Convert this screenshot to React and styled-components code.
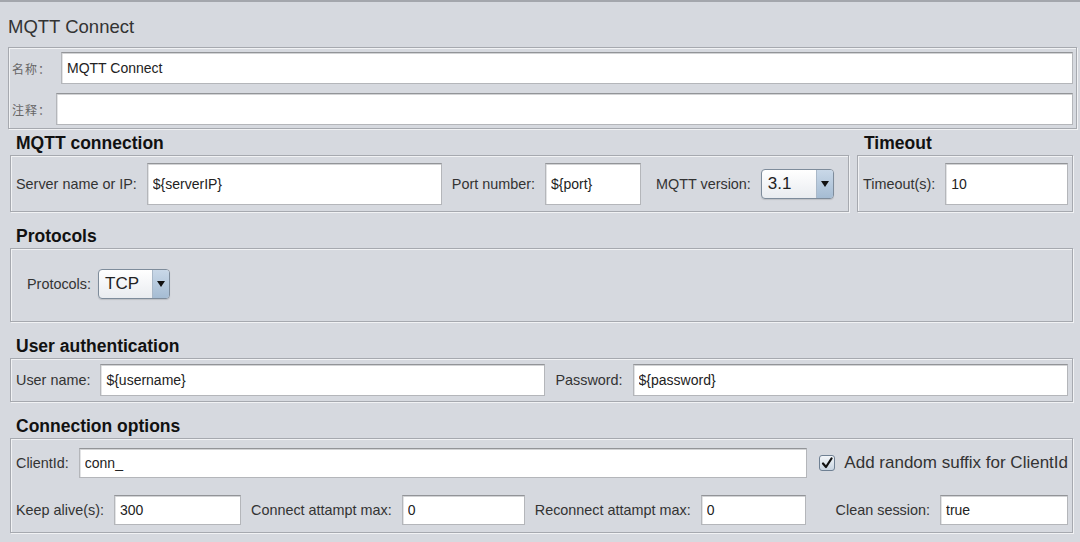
import React from 'react';
import styled, { createGlobalStyle } from 'styled-components';

const GlobalStyle = createGlobalStyle`
  html, body {
    margin: 0;
    padding: 0;
    background: #d6d9df;
  }
  * {
    box-sizing: border-box;
  }
`;

const Page = styled.div`
  width: 1080px;
  height: 542px;
  overflow: hidden;
  background: #d6d9df;
  border-top: 2px solid #a3a6ac;
  font-family: "Liberation Sans", Arial, sans-serif;
  color: #333;
`;

const PageTitle = styled.div`
  height: 45px;
  padding: 5px 0 0 8px;
  display: flex;
  align-items: center;
  font-size: 18.5px;
  color: #333;
`;

const Etched = styled.div`
  border: 1px solid #a6a9af;
  box-shadow: inset 1px 1px 0 #f1f2f4, 1px 1px 0 #f1f2f4;
`;

const NamePanel = styled(Etched)`
  margin-left: 8px;
  width: 1069px;
  height: 82px;
  padding: 4px 3px 3px 2px;
  display: flex;
  flex-direction: column;
  gap: 9px;
`;

const NameRow = styled.div`
  display: flex;
  align-items: center;
  height: 32px;
  gap: ${(p) => p.$gap}px;
`;

const CjkLabel = styled.span`
  width: 36px;
  padding-left: 1px;
  font-family: "Noto Sans CJK SC", "Liberation Sans", sans-serif;
  font-size: 12px;
  letter-spacing: 1px;
  color: #666;
  white-space: nowrap;
`;

const TextField = styled.input`
  height: ${(p) => p.$h || 30}px;
  width: ${(p) => (p.$w ? `${p.$w}px` : 'auto')};
  flex: ${(p) => (p.$w ? 'none' : '1')};
  min-width: 0;
  margin: 0;
  padding: 0 5px;
  background: #fff;
  border: 1px solid #b4b6ba;
  border-top-color: #929498;
  box-shadow: inset 0 1px 0 #d2d3d5, inset 1px 0 0 #e2e3e5;
  font-family: "Liberation Sans", Arial, sans-serif;
  font-size: 14px;
  color: #222;
  outline: none;
`;

const TopRow = styled.div`
  display: flex;
  gap: 8px;
  margin: 0 7px 0 10px;
`;

const SectionWrap = styled.div`
  width: ${(p) => (p.$w ? `${p.$w}px` : 'auto')};
  flex: ${(p) => (p.$w ? 'none' : '1')};
  min-width: 0;
  margin: ${(p) => (p.$stacked ? '10px 7px 0 10px' : '0')};
`;

const SectionTitle = styled.div`
  height: 26px;
  line-height: 28px;
  padding-left: ${(p) => p.$indent || 6}px;
  font-weight: bold;
  font-size: 17.5px;
  color: #111;
  white-space: nowrap;
`;

const Panel = styled(Etched)`
  height: ${(p) => p.$h}px;
  display: flex;
  flex-direction: ${(p) => (p.$column ? 'column' : 'row')};
  align-items: ${(p) => (p.$column ? 'stretch' : 'center')};
  gap: ${(p) => (p.$column ? 17 : 0)}px;
  padding: ${(p) => p.$pad || '0 4px 0 5px'};
`;

const Row = styled.div`
  display: flex;
  align-items: center;
  gap: 10px;
  width: 100%;
`;

const Label = styled.span`
  flex: none;
  font-size: 14.4px;
  color: #333;
  white-space: nowrap;
  margin-left: ${(p) => p.$ml || 0}px;
`;

const Field = styled.div`
  display: flex;
  align-items: center;
  gap: 10px;
  margin-left: ${(p) => (p.$push ? 'auto' : '0')};
`;

const Combo = styled.div`
  flex: none;
  width: ${(p) => p.$w}px;
  height: 30px;
  margin-left: ${(p) => p.$ml || 0}px;
  display: flex;
  border: 1px solid #7e8c9b;
  border-radius: 4px;
  overflow: hidden;
  background: linear-gradient(#ffffff, #e9ecf0);
  box-shadow: 0 1px 1px rgba(0, 0, 0, 0.12);
`;

const ComboText = styled.div`
  flex: 1;
  display: flex;
  align-items: center;
  padding-left: 6px;
  font-size: 17px;
  color: #222;
`;

const ComboArrow = styled.div`
  width: 17px;
  display: flex;
  align-items: center;
  justify-content: center;
  border-left: 1px solid #a9b8c8;
  background: linear-gradient(#c9d8e8, #a5bcd3);
`;

const CheckWrap = styled.label`
  display: flex;
  align-items: center;
  gap: 9px;
  margin-left: 2px;
  font-size: 17px;
  color: #333;
  white-space: nowrap;
`;

const CheckBox = styled.span`
  width: 16px;
  height: 16px;
  display: flex;
  align-items: center;
  justify-content: center;
  border: 1px solid #6f8093;
  border-radius: 3px;
  background: linear-gradient(#f3f6f9, #c8d4e1);
`;

function Section({ title, width, stacked, indent, children }) {
  return (
    <SectionWrap $w={width} $stacked={stacked}>
      <SectionTitle $indent={indent}>{title}</SectionTitle>
      {children}
    </SectionWrap>
  );
}

function ComboBox({ value, width, ml }) {
  return (
    <Combo $w={width} $ml={ml}>
      <ComboText>{value}</ComboText>
      <ComboArrow>
        <svg width="8" height="6" viewBox="0 0 8 6">
          <polygon points="0,0 8,0 4,6" fill="#111" />
        </svg>
      </ComboArrow>
    </Combo>
  );
}

export default function App() {
  return (
    <Page>
      <GlobalStyle />
      <PageTitle>MQTT Connect</PageTitle>

      <NamePanel>
        <NameRow $gap={14}>
          <CjkLabel>名称：</CjkLabel>
          <TextField $h={32} defaultValue="MQTT Connect" />
        </NameRow>
        <NameRow $gap={9}>
          <CjkLabel>注释：</CjkLabel>
          <TextField $h={32} defaultValue="" />
        </NameRow>
      </NamePanel>

      <TopRow>
        <Section title="MQTT connection" width={839}>
          <Panel $h={57}>
            <Row>
              <Label>Server name or IP:</Label>
              <TextField $h={42} $w={295} defaultValue="${serverIP}" />
              <Label>Port number:</Label>
              <TextField $h={42} $w={96} defaultValue="${port}" />
              <Label $ml={5}>MQTT version:</Label>
              <ComboBox value="3.1" width={73} />
            </Row>
          </Panel>
        </Section>
        <Section title="Timeout" indent={7}>
          <Panel $h={57}>
            <Row>
              <Label>Timeout(s):</Label>
              <TextField $h={42} defaultValue="10" />
            </Row>
          </Panel>
        </Section>
      </TopRow>

      <Section title="Protocols" stacked>
        <Panel $h={74} $pad="0 4px 2px 16px">
          <Row>
            <Label>Protocols:</Label>
            <ComboBox value="TCP" width={72} ml={-3} />
          </Row>
        </Panel>
      </Section>

      <Section title="User authentication" stacked>
        <Panel $h={44}>
          <Row>
            <Label>User name:</Label>
            <TextField $h={32} $w={445} defaultValue="${username}" />
            <Label>Password:</Label>
            <TextField $h={32} defaultValue="${password}" />
          </Row>
        </Panel>
      </Section>

      <Section title="Connection options" stacked>
        <Panel $h={95} $column $pad="9px 4px 0 5px">
          <Row>
            <Label>ClientId:</Label>
            <TextField $h={30} defaultValue="conn_" />
            <CheckWrap>
              <CheckBox>
                <svg width="12" height="12" viewBox="0 0 12 12">
                  <path d="M2 6.5 L5 10 L10.5 1.5" fill="none" stroke="#111" strokeWidth="2.2" strokeLinecap="round" strokeLinejoin="round" />
                </svg>
              </CheckBox>
              Add random suffix for ClientId
            </CheckWrap>
          </Row>
          <Row>
            <Field>
              <Label>Keep alive(s):</Label>
              <TextField $h={30} $w={127} defaultValue="300" />
            </Field>
            <Field>
              <Label>Connect attampt max:</Label>
              <TextField $h={30} $w={123} defaultValue="0" />
            </Field>
            <Field>
              <Label>Reconnect attampt max:</Label>
              <TextField $h={30} $w={105} defaultValue="0" />
            </Field>
            <Field $push>
              <Label>Clean session:</Label>
              <TextField $h={30} $w={128} defaultValue="true" />
            </Field>
          </Row>
        </Panel>
      </Section>
    </Page>
  );
}
